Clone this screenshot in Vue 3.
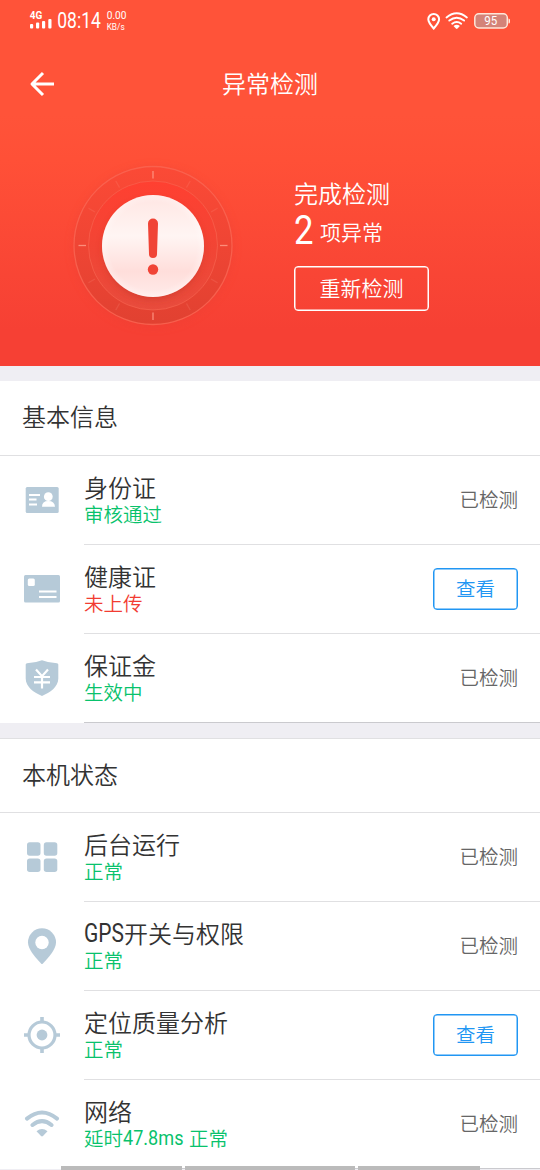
<script setup>
const sections = [
  {
    title: '基本信息',
    rows: [
      { icon: 'id', title: '身份证', sub: '审核通过', tone: 'ok' },
      { icon: 'card', title: '健康证', sub: '未上传', tone: 'bad', action: true },
      { icon: 'shield', title: '保证金', sub: '生效中', tone: 'ok' }
    ]
  },
  {
    title: '本机状态',
    rows: [
      { icon: 'grid', title: '后台运行', sub: '正常', tone: 'ok' },
      { icon: 'pin', latin: 'GPS', title: '开关与权限', sub: '正常', tone: 'ok' },
      { icon: 'target', title: '定位质量分析', sub: '正常', tone: 'ok', action: true },
      { icon: 'wifi', title: '网络', sub: '延时', value: '47.8ms', state: '正常', tone: 'ok' }
    ]
  }
]
const ticks = Array.from({ length: 12 }, (_, i) => i * 30)
</script>

<template>
  <div class="screen">
    <header class="hero">
      <svg class="status" width="540" height="42" viewBox="0 0 540 42" fill="#fff">
        <text x="29.800" y="18.500" font-size="10" font-weight="700" textLength="12.500" lengthAdjust="spacingAndGlyphs">4G</text>
        <rect x="30" y="24" width="3.200" height="4.500" rx="1" />
        <rect x="36" y="22.500" width="3.200" height="6" rx="1" />
        <rect x="42" y="21" width="3.200" height="7.500" rx="1" />
        <rect x="48.300" y="19" width="3.200" height="9.500" rx="1" />
        <text x="57.300" y="28" font-size="21.500" textLength="43.500" lengthAdjust="spacingAndGlyphs">08:14</text>
        <text x="106.700" y="19" font-size="10.500" textLength="19.800" lengthAdjust="spacingAndGlyphs">0.00</text>
        <text x="106.700" y="30" font-size="9.500" textLength="18" lengthAdjust="spacingAndGlyphs">KB/s</text>
        <g fill="none" stroke="#fff" stroke-linecap="round">
          <path d="M433.700 28.500C431 25.500 428.300 22.400 428.300 19.300A5.400 5.400 0 0 1 439.100 19.300C439.100 22.400 436.400 25.500 433.700 28.500Z" stroke-width="2" />
          <path d="M446.500 17.400Q456.700 9.200 466.900 17.400M449.300 20.600Q456.700 14.800 464.100 20.600M452.200 23.700Q456.700 20.300 461.200 23.700" stroke-width="1.900" />
        </g>
        <circle cx="433.700" cy="19.200" r="2" />
        <path d="M453.500 26Q456.700 23.700 459.900 26L457.500 28.600Q456.700 29.300 455.900 28.600Z" />
        <rect x="474.800" y="13.800" width="32.500" height="14.200" rx="4" fill="#d48378" stroke="#ffe6d8" stroke-width="1.500" />
        <path d="M508.500 18.500Q510 18.500 510 20V22Q510 23.500 508.500 23.500Z" fill="#ffe6d8" />
        <text x="484.300" y="24.500" font-size="12.500" textLength="13" lengthAdjust="spacingAndGlyphs">95</text>
      </svg>

      <div class="nav">
        <svg class="back" width="26" height="26" viewBox="0 0 26 26" fill="none" stroke="#fff" stroke-width="3" stroke-linejoin="round">
          <path d="M14 2L3 13L14 24M3 13H25" />
        </svg>
        <h1>异常检测</h1>
      </div>

      <div class="summary">
        <svg class="dial" width="190" height="190" viewBox="0 0 190 190">
          <defs>
            <linearGradient id="ring" x1="0" y1="0" x2="0" y2="1">
              <stop offset="0" stop-color="#fb4a36" />
              <stop offset=".5" stop-color="#ef4534" />
              <stop offset="1" stop-color="#e14131" />
            </linearGradient>
            <linearGradient id="well" x1="0" y1="0" x2="0" y2="1">
              <stop offset="0" stop-color="#ff4031" />
              <stop offset=".55" stop-color="#f14535" />
              <stop offset="1" stop-color="#e84c3d" />
            </linearGradient>
            <linearGradient id="ball" x1="0" y1="0" x2="0" y2="1">
              <stop offset="0" stop-color="#ffe6e3" />
              <stop offset=".4" stop-color="#fff5f3" />
              <stop offset=".75" stop-color="#ffdedb" />
              <stop offset="1" stop-color="#ffebe9" />
            </linearGradient>
            <radialGradient id="rim">
              <stop offset=".86" stop-color="#fff" stop-opacity="0" />
              <stop offset="1" stop-color="#fff" stop-opacity=".3" />
            </radialGradient>
            <filter id="soft" x="-30%" y="-30%" width="160%" height="160%">
              <feGaussianBlur stdDeviation="4" />
            </filter>
          </defs>
          <circle cx="93" cy="97" r="80" fill="#e83e31" opacity=".35" filter="url(#soft)" />
          <circle cx="93" cy="95.500" r="79" fill="url(#ring)" stroke="#fa6754" stroke-opacity=".8" stroke-width="1.300" />
          <circle cx="93" cy="95.500" r="64.500" fill="url(#well)" stroke="#f86551" stroke-opacity=".65" />
          <line
            v-for="a in ticks"
            :key="a"
            x1="93" y1="21" x2="93" y2="28.500"
            stroke="#ff9a87"
            stroke-width="1.300"
            :opacity="a % 90 === 0 ? 0.85 : 0.18"
            :transform="`rotate(${a} 93 95.500)`"
          />
          <circle cx="93" cy="100" r="48.500" fill="#b92d22" opacity=".55" filter="url(#soft)" />
          <circle cx="93" cy="96" r="51" fill="url(#ball)" />
          <circle cx="93" cy="96" r="51" fill="url(#rim)" />
          <path d="M88 73.500A5 5 0 0 1 98 73.500L97 104A4 4 0 0 1 89 104Z" fill="#f04436" />
          <circle cx="93" cy="119.500" r="5.200" fill="#f04436" />
        </svg>
        <div class="result">
          <div class="done">完成检测</div>
          <div class="count">
            <svg width="26" height="48" viewBox="0 0 26 48"><text x="0" y="37" font-size="40" textLength="19.500" lengthAdjust="spacingAndGlyphs" fill="#fff">2</text></svg>
            <span>项异常</span>
          </div>
          <button class="retry">重新检测</button>
        </div>
      </div>
    </header>

    <section v-for="s in sections" :key="s.title" class="group">
      <h2>{{ s.title }}</h2>
      <div v-for="r in s.rows" :key="r.title" class="row">
        <svg class="icon" width="36" height="36" viewBox="0 0 36 36" fill="#b6cad8">
          <template v-if="r.icon === 'id'">
            <rect x="1.700" y="5" width="33" height="26" rx="1.500" />
            <path d="M5 13H16M5 17.500H12.500M5 22.500H13" stroke="#fff" stroke-width="2" />
            <circle cx="24.300" cy="14.700" r="4.400" fill="#fff" />
            <path d="M18 24.800Q18 19 24.300 19T31 24.800Z" fill="#fff" />
          </template>
          <template v-else-if="r.icon === 'card'">
            <rect x="0" y="4" width="36" height="27.500" rx="1.500" />
            <rect x="3.800" y="7.500" width="7" height="7.500" rx="1.500" fill="#fff" />
            <path d="M15 20.500H32.500M15 26H32.500" stroke="#fff" stroke-width="2" />
          </template>
          <template v-else-if="r.icon === 'shield'">
            <path d="M18 .2Q25 3 33 3.200Q34.300 3.300 34.300 4.600V18.500C34.300 27 26 32.500 18 36C10 32.500 1.700 27 1.700 18.500V4.600Q1.700 3.300 3 3.200Q11 3 18 .2Z" />
            <path d="M12 9.500L18 16.200L24 9.500M18 16V28.500M10 17H26M10 22.300H26" fill="none" stroke="#fff" stroke-width="2.200" />
          </template>
          <template v-else-if="r.icon === 'grid'">
            <rect x="3" y="3.300" width="13.500" height="13.500" rx="2.700" />
            <rect x="19.800" y="3.300" width="13.500" height="13.500" rx="2.700" />
            <rect x="3" y="19.400" width="13.500" height="13.500" rx="2.700" />
            <rect x="19.800" y="19.400" width="13.500" height="13.500" rx="2.700" />
          </template>
          <template v-else-if="r.icon === 'pin'">
            <path d="M18 36.500C11 29 4 21.500 4 14.300A14 14 0 0 1 32 14.300C32 21.500 25 29 18 36.500Z" />
            <circle cx="18" cy="14.500" r="6.700" fill="#fff" />
          </template>
          <template v-else-if="r.icon === 'target'">
            <circle cx="18" cy="18" r="13" fill="none" stroke="#b6cad8" stroke-width="3.200" />
            <circle cx="18" cy="18" r="5.400" />
            <path d="M18 0V5M18 31V36M0 18H5M31 18H36" stroke="#b6cad8" stroke-width="3.600" />
          </template>
          <template v-else>
            <path d="M3 12.600Q18 .4 33 12.600M8.500 19Q18 11.200 27.500 19" fill="none" stroke="#b6cad8" stroke-width="4" stroke-linecap="round" />
            <path d="M12.500 25.200Q18 20.900 23.500 25.200L19 30Q18 30.900 17 30Z" />
          </template>
        </svg>
        <div class="body">
          <div class="text">
            <div class="name">
              <svg v-if="r.latin" width="40" height="38" viewBox="0 0 40 38"><text x="0" y="27.500" font-size="25" textLength="40" lengthAdjust="spacingAndGlyphs" fill="#333">{{ r.latin }}</text></svg>{{ r.title }}
            </div>
            <div class="sub" :class="r.tone">
              {{ r.sub }}<svg v-if="r.value" width="66" height="32" viewBox="0 0 66 32"><text x="0" y="23" font-size="20.500" textLength="60.500" lengthAdjust="spacingAndGlyphs" fill="#08c26c">{{ r.value }}</text></svg>{{ r.state }}
            </div>
          </div>
          <button v-if="r.action" class="view">查看</button>
          <span v-else class="checked">已检测</span>
        </div>
      </div>
    </section>

    <div class="segments"><i></i><i></i><i></i></div>
  </div>
</template>

<style>
html, body { overflow: hidden; }
</style>

<style scoped>
.screen {
  position: relative;
  width: 540px;
  height: 1170px;
  overflow: hidden;
  background: #efeef3;
  color: #333;
  font-family: "Noto Sans CJK SC", sans-serif;
  font-weight: 350;
}
.screen svg { display: block; flex: none; }
svg text { font-family: Roboto, sans-serif; font-weight: 400; }
svg text[font-weight="700"] { font-weight: 700; }
.hero {
  height: 366px;
  color: #fff;
  background: linear-gradient(#ff5339 0, #ff5339 115px, #ff5037 160px, #f64034 330px, #f64034 366px);
}
.nav { display: flex; align-items: center; height: 83px; padding-left: 29px; }
h1, h2 { margin: 0; font-size: 24px; font-weight: 350; line-height: 36px; }
h1 { height: 38px; margin-left: 167px; }
.summary { display: flex; padding: 25px 0 0 60px; }
.result { width: 136px; margin-left: 44px; padding-top: 25px; }
.done { font-size: 24px; line-height: 36px; }
.count { display: flex; align-items: flex-start; height: 55px; font-size: 21px; }
.count svg { margin-top: -4px; }
.count span { line-height: 40px; }
.screen button {
  box-sizing: border-box;
  display: flex;
  align-items: center;
  justify-content: center;
  font-family: inherit;
  font-weight: 350;
  background: transparent;
}
.screen .retry {
  width: 135px;
  height: 45px;
  padding: 0 0 3px;
  border: 1px solid #fff;
  border-radius: 4px;
  box-shadow: inset 0 0 0 .5px #fff;
  font-size: 21px;
  color: #fff;
}
.group { margin-top: 15px; background: #fff; }
.group + .group { margin-top: 15px; border-top: 1px solid #e0e0e2; }
h2 { height: 74px; padding-left: 22px; line-height: 70px; border-bottom: 1px solid #e0e0e2; }
.group + .group h2 { height: 73px; }
.row { display: flex; align-items: center; height: 89px; padding-left: 24px; }
.icon { margin: -2px 24px 0 0; }
.body {
  box-sizing: border-box;
  display: flex;
  flex: 1;
  align-items: center;
  justify-content: space-between;
  height: 89px;
  padding-right: 22px;
  border-bottom: 1px solid #e0e0e2;
}
.group .row:last-child .body { border-color: #cacace; }
.text { padding-bottom: 1px; }
.name, .sub { display: flex; align-items: center; white-space: nowrap; }
.name { font-size: 24px; line-height: 28px; height: 28px; }
.sub { font-size: 19.500px; line-height: 25px; height: 25px; }
.ok { color: #08c26c; }
.bad { color: #f23c32; }
.checked { padding-bottom: 4px; font-size: 19.500px; color: #666; }
.screen .view {
  width: 85px;
  height: 42px;
  padding: 0 0 3px;
  border: 1px solid #2196f3;
  border-radius: 4px;
  box-shadow: inset 0 0 0 .5px #2196f3;
  font-size: 19.500px;
  color: #2196f3;
}
.segments { position: absolute; left: 61px; bottom: 0; display: flex; gap: 3px; }
.segments i { height: 4px; background: #bbb; }
.segments i:nth-child(1) { width: 121px; }
.segments i:nth-child(2) { width: 170px; }
.segments i:nth-child(3) { width: 122px; }
</style>
